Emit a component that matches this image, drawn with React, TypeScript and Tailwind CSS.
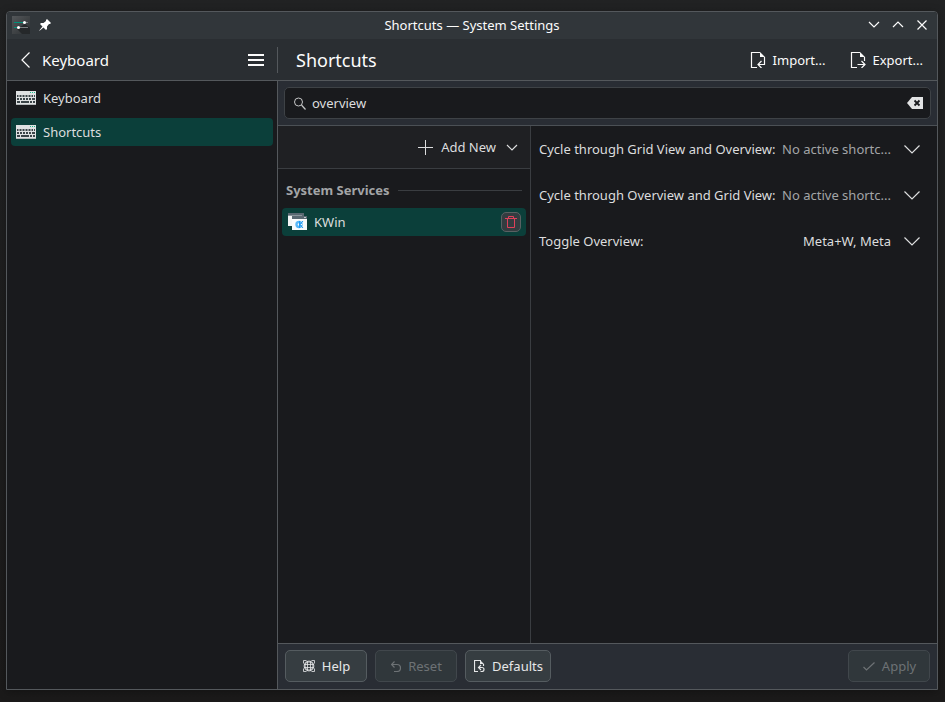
import type { ReactNode } from "react";

function Svg({ w, h, children, className = "" }: { w: number; h: number; children: ReactNode; className?: string }) {
  return (
    <svg width={w} height={h} viewBox={`0 0 ${w} ${h}`} fill="none" stroke="currentColor" className={`shrink-0 ${className}`} aria-hidden="true">
      {children}
    </svg>
  );
}

function SettingsIcon() {
  return (
    <Svg w={18} h={18}>
      <defs>
        <linearGradient id="app-bg" x1="0" y1="0" x2="1" y2="1">
          <stop offset="0" stopColor="#54575a" />
          <stop offset="1" stopColor="#2c3032" />
        </linearGradient>
      </defs>
      <rect width="18" height="18" fill="url(#app-bg)" stroke="none" />
      <path d="M13 8l5 4v6H10L5 13z" fill="#25282a" stroke="none" />
      <path d="M2 6.500h10" stroke="#009079" />
      <path d="M14 6.500h2M8 11.500h8" stroke="#7b7f81" />
      <path d="M2 11.500h4" stroke="#009079" />
      <circle cx="12.500" cy="6.500" r="1.500" fill="#fff" stroke="none" />
      <circle cx="6.500" cy="11.500" r="1.500" fill="#fff" stroke="none" />
    </Svg>
  );
}

function PinIcon() {
  return (
    <Svg w={12} h={12} className="text-white">
      <path d="M8 0l4 4-1 1H10L8 7.500 8 10 7 11 4.500 8.500 1.500 11 0 12 1 10.500 3.500 7.500 1 5 2 4h2.500L7 2V1z" fill="currentColor" stroke="none" />
    </Svg>
  );
}

function KeyboardIcon() {
  return (
    <Svg w={20} h={14}>
      <rect width="20" height="14" fill="#dfe1e2" stroke="none" />
      <rect y="13" width="20" height="1" fill="#b4b8ba" stroke="none" />
      <path d="M14 1.500h1M16 1.500h1M18 1.500h1" stroke="#1abc8c" />
      <path d="M1 5h1.500M3.500 5h2M6.500 5h2M9.500 5h2M12.500 5h2M15.500 5h1.500M18 5h1" stroke="#3b4448" strokeWidth="2" />
      <path d="M1 8h2M4 8h2M7 8h2M10 8h2M13 8h2M16 8h3" stroke="#3b4448" strokeWidth="2" />
      <path d="M1 11h3M5 11h8M14 11h2M17 11h2" stroke="#3b4448" strokeWidth="2" />
    </Svg>
  );
}

function ChevronDown({ size }: { size: "lg" | "sm" }) {
  return size === "lg" ? (
    <Svg w={16} h={9}><path d="M0.500 0.500L8 8 15.500 0.500" strokeWidth="1.200" /></Svg>
  ) : (
    <Svg w={12} h={7}><path d="M1 1l5 5 5-5" strokeWidth="1.200" /></Svg>
  );
}

function ExchangeIcon({ out = false }: { out?: boolean }) {
  return (
    <Svg w={16} h={16}>
      <path d="M7 15.500H1.500V0.500H10M14.500 5v4" strokeWidth="1.200" />
      <path d="M10 0v5h5z" fill="currentColor" stroke="none" />
      {out ? (
        <path d="M7.500 12.500h7.500M11.500 9l3.500 3.500L11.500 16" strokeWidth="1.200" />
      ) : (
        <path d="M14.500 9v3.500H8M11.500 9L8 12.500l3.500 3.500" strokeWidth="1.200" />
      )}
    </Svg>
  );
}

function KWinIcon() {
  return (
    <Svg w={19} h={18}>
      <rect x="0" y="0" width="16" height="13" fill="#f3f5f6" stroke="none" />
      <rect x="0" y="0" width="16" height="3" fill="#596872" stroke="none" />
      <path d="M0 2.500h14" stroke="#8a959c" />
      <rect x="4" y="3" width="15" height="14" fill="#fafbfc" stroke="none" />
      <rect x="4" y="3" width="15" height="3" fill="#596872" stroke="none" />
      <path d="M16 4.500h2" stroke="#c3cacf" />
      <circle cx="11" cy="11.500" r="2.500" stroke="#5cb8f7" strokeWidth="2.400" />
      <path d="M11.500 8v7M15 8L12 11.500l3 3.500" stroke="#1d99f3" />
      <path d="M13 11h1v1h-1z" fill="#fafbfc" stroke="none" />
    </Svg>
  );
}

function TrashIcon() {
  return (
    <Svg w={12} h={12} className="text-[#e0415a]">
      <path d="M0 2.500h12M2.500 3v8.500h7V3M3.500 2V0.500h5V2" />
    </Svg>
  );
}

function HelpIcon() {
  return (
    <Svg w={12} h={12}>
      <circle cx="6" cy="6" r="4.400" strokeWidth="2" strokeOpacity="0.750" />
      <path d="M4.500 1v10M7.500 1v10M1 4.500h10M1 7.500h10" strokeWidth="0.800" />
      <path d="M0.500 3.500V0.500h3M8.500 0.500h3v3M11.500 8.500v3h-3M3.500 11.500h-3v-3" strokeOpacity="0.800" />
    </Svg>
  );
}

function DefaultsIcon() {
  return (
    <Svg w={11} h={12}>
      <path d="M4 11.500H0.500V0.500H7M9.500 4v2" strokeWidth="1.200" />
      <path d="M6 0v4h4z" fill="currentColor" stroke="none" />
      <path d="M4.500 7.500H8a2 2 0 0 1 0 4H6.500M7 5l-2.500 2.500L7 10" strokeWidth="1.200" />
    </Svg>
  );
}

const modules = [
  { name: "Keyboard", selected: false },
  { name: "Shortcuts", selected: true },
];

const actions = [
  { name: "Cycle through Grid View and Overview:", keys: "No active shortc...", active: false },
  { name: "Cycle through Overview and Grid View:", keys: "No active shortc...", active: false },
  { name: "Toggle Overview:", keys: "Meta+W, Meta", active: true },
];

const footerButton = "flex h-8 items-center justify-center gap-[7px] rounded-[5px] border border-[#555c60] bg-[#363d41] pl-px text-[#e6e7e8] disabled:border-[#41474c] disabled:bg-[#30373b] disabled:text-[#6d7275]";

export default function App() {
  return (
    <div className="flex min-h-screen bg-[#1e1f20] bg-linear-to-b from-[#212223] to-[#1b1a1a] pt-[11px] pr-[7px] pb-3 pl-1.5 font-['Noto_Sans',sans-serif] text-[13px] leading-[18px] text-[#dcddde]">
      <div className="flex min-w-0 flex-1 flex-col overflow-hidden rounded-t-[4px] border border-[#54585c] bg-[#191a1d] shadow-[0_2px_10px_rgba(0,0,0,0.3)]">
        <header className="grid h-[27px] shrink-0 grid-cols-[1fr_auto_1fr] items-center bg-[#31363a] px-[5px] pb-0.5 text-[#fcfcfc]">
          <div className="flex items-center gap-[9px]">
            <SettingsIcon />
            <button type="button" aria-label="Keep on all desktops"><PinIcon /></button>
          </div>
          <h1>Shortcuts — System Settings</h1>
          <div className="flex items-center justify-end gap-3 pr-1">
            <button type="button" aria-label="Minimize"><ChevronDown size="sm" /></button>
            <button type="button" aria-label="Maximize"><Svg w={12} h={7}><path d="M1 6l5-5 5 5" strokeWidth="1.200" /></Svg></button>
            <button type="button" aria-label="Close"><Svg w={12} h={10}><path d="M1.500 0.500l9 9M10.500 0.500l-9 9" strokeWidth="1.200" /></Svg></button>
          </div>
        </header>

        <div className="flex h-[42px] shrink-0 items-center border-b border-[#54585c] bg-[#2a2e32] text-[#fcfcfc]">
          <div className="flex w-[271px] shrink-0 items-center self-stretch px-3.5">
            <button type="button" className="flex items-center gap-3 text-[15px] leading-5">
              <Svg w={9} h={16}><path d="M8.500 0.500L1 8l7.500 7.500" strokeWidth="1.200" /></Svg>
              Keyboard
            </button>
            <button type="button" aria-label="Open menu" className="ml-auto">
              <Svg w={16} h={12}><path d="M0 1h16M0 6h16M0 11h16" strokeWidth="2" /></Svg>
            </button>
          </div>
          <div className="-ml-px h-[26px] w-px bg-[#54585c]" />
          <h2 className="pl-[18px] text-[18px] leading-6">Shortcuts</h2>
          <div className="ml-auto flex gap-6 pr-3.5">
            <button type="button" className="flex items-center gap-[7px]"><ExchangeIcon />Import...</button>
            <button type="button" className="flex items-center gap-[7px]"><ExchangeIcon out />Export...</button>
          </div>
        </div>

        <div className="flex flex-1">
          <nav className="w-[271px] shrink-0 border-r border-[#54585c] px-1 pt-[3px]">
            <ul className="flex flex-col gap-1.5">
              {modules.map((m) => (
                <li key={m.name}>
                  <a
                    href="#"
                    aria-current={m.selected ? "page" : undefined}
                    className={`flex h-7 items-center gap-[7px] rounded-[4px] pl-[5px] ${m.selected ? "bg-[#0b3f3a]" : ""}`}
                  >
                    <KeyboardIcon />
                    {m.name}
                  </a>
                </li>
              ))}
            </ul>
          </nav>

          <main className="flex min-w-0 flex-1 flex-col">
            <div className="border-b border-[#4b5055] bg-[#292d34] p-1.5">
              <div className="flex h-8 items-center gap-1.5 rounded-[5px] border border-[#3e4246] bg-[#191a1d] pr-[7px] pl-2">
                <Svg w={13} h={13} className="text-[#c5c6c7]">
                  <circle cx="5.500" cy="5" r="4" />
                  <path d="M8.500 8l4 4.500" strokeWidth="1.200" />
                </Svg>
                <input type="text" aria-label="Search" defaultValue="overview" className="min-w-0 flex-1 bg-transparent outline-none" />
                <button type="button" aria-label="Clear search">
                  <Svg w={16} h={12}>
                    <path d="M0 6L5 0H16V12H5z" fill="#e2e3e4" stroke="none" />
                    <path d="M7.500 3.500l5 5M12.500 3.500l-5 5" stroke="#191a1d" strokeWidth="1.800" />
                  </Svg>
                </button>
              </div>
            </div>

            <div className="flex flex-1">
              <section className="w-[253px] shrink-0 border-r border-[#3a3d41]">
                <div className="flex h-[43px] items-center justify-end border-b border-[#3a3d41] bg-[#1f2023] pr-3">
                  <button type="button" className="flex items-center">
                    <Svg w={15} h={15}><path d="M7.500 0v15M0 7.500h15" /></Svg>
                    <span className="mr-2.5 ml-2">Add New</span>
                    <ChevronDown size="sm" />
                  </button>
                </div>
                <div className="flex items-center gap-2 px-2 pt-3">
                  <h3 className="font-bold text-[#a3a5a7]">System Services</h3>
                  <div className="h-px flex-1 bg-[#3a3d41]" />
                </div>
                <div className="mx-1 mt-[9px] flex h-7 items-center rounded-[4px] bg-[#0b3f3a] pr-[5px] pl-1.5">
                  <a href="#" className="flex flex-1 items-center gap-[7px]"><KWinIcon />KWin</a>
                  <button type="button" aria-label="Remove all shortcuts for KWin" className="flex size-5 items-center justify-center rounded-[5px] border border-[#5a6163] bg-[#343c40]">
                    <TrashIcon />
                  </button>
                </div>
              </section>

              <ul className="min-w-0 flex-1">
                {actions.map((a) => (
                  <li key={a.name}>
                    <button type="button" className="flex h-[46px] w-full items-center pr-[17px] pl-2 text-left">
                      <span className="flex-1 whitespace-nowrap">{a.name}</span>
                      <span className={`mr-[13px] ml-1.5 whitespace-nowrap ${a.active ? "" : "text-[#a3a5a7]"}`}>{a.keys}</span>
                      <ChevronDown size="lg" />
                    </button>
                  </li>
                ))}
              </ul>
            </div>

            <footer className="flex gap-2 border-t border-[#54585c] bg-[#292d34] px-[7px] pt-1.5 pb-[7px]">
              <button type="button" className={`${footerButton} w-[82px]`}><HelpIcon />Help</button>
              <button type="button" disabled className={`${footerButton} w-[82px]`}>
                <Svg w={10} h={11}><path d="M0.500 3.500H6a3.500 3.500 0 0 1 0 7H3M3.500 0.500l-3 3 3 3" strokeWidth="1.200" /></Svg>
                Reset
              </button>
              <button type="button" className={`${footerButton} w-[86px]`}><DefaultsIcon />Defaults</button>
              <button type="button" disabled className={`${footerButton} ml-auto w-[82px]`}>
                <Svg w={12} h={9}><path d="M0.500 5l3 3L11.500 0.500" strokeWidth="1.200" /></Svg>
                Apply
              </button>
            </footer>
          </main>
        </div>
      </div>
    </div>
  );
}
